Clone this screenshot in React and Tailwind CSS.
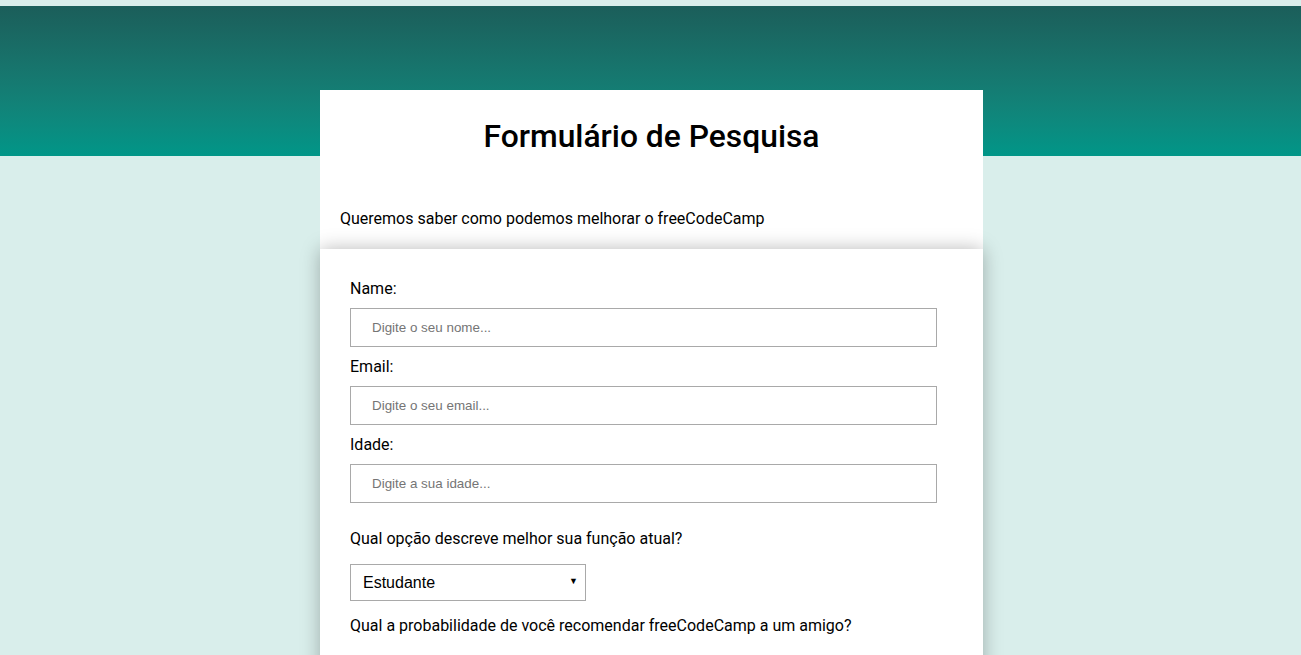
export default function App() {
  return (
    <div className="h-[655px] overflow-hidden bg-[#d9eeeb] pt-[6px] pl-[2px] font-['Roboto',sans-serif] text-black">
      {/* header band */}
      <div className="-ml-[2px] h-[150px] bg-gradient-to-b from-[#1b5e5a] to-[#009688]" />

      <div className="mx-auto -mt-[66px] w-[663px]">
        <header className="bg-white pt-[27px] pb-[18px]">
          <h1 className="text-center text-[31.8px] leading-[38px] font-medium">Formulário de Pesquisa</h1>
          <p className="mt-[52px] pl-5 text-base leading-6">Queremos saber como podemos melhorar o freeCodeCamp</p>
        </header>

        <form className="relative bg-white pl-[30px] pt-[28px] pb-10 shadow-[0_0_18px_rgba(0,0,0,0.28)]">
          <label className="block text-base leading-6">Name:</label>
          <input
            type="text"
            placeholder="Digite o seu nome..."
            className="mt-[7px] block h-[39px] w-[587px] border border-[#a9a9a9] pl-[21px] font-['Liberation_Sans',sans-serif] text-[13.4px] placeholder:text-[#757575] outline-none"
          />
          <label className="mt-2 block text-base leading-6">Email:</label>
          <input
            type="email"
            placeholder="Digite o seu email..."
            className="mt-[7px] block h-[39px] w-[587px] border border-[#a9a9a9] pl-[21px] font-['Liberation_Sans',sans-serif] text-[13.4px] placeholder:text-[#757575] outline-none"
          />
          <label className="mt-2 block text-base leading-6">Idade:</label>
          <input
            type="number"
            placeholder="Digite a sua idade..."
            className="mt-[7px] block h-[39px] w-[587px] border border-[#a9a9a9] pl-[21px] font-['Liberation_Sans',sans-serif] text-[13.4px] placeholder:text-[#757575] outline-none"
          />

          <p className="mt-6 text-base leading-6">Qual opção descreve melhor sua função atual?</p>
          <div className="relative mt-[13px] w-[236px]">
            <select className="block h-[37px] w-full appearance-none border border-[#a9a9a9] bg-white pl-3 font-['Liberation_Sans',sans-serif] text-base text-black outline-none">
              <option>Estudante</option>
              <option>Trabalho integral</option>
              <option>Aprendendo</option>
              <option>Outro</option>
            </select>
            <span className="pointer-events-none absolute right-[8px] top-[13px] text-[9px] leading-none">▼</span>
          </div>

          <p className="mt-[13px] text-base leading-6">Qual a probabilidade de você recomendar freeCodeCamp a um amigo?</p>
        </form>
      </div>
    </div>
  );
}
